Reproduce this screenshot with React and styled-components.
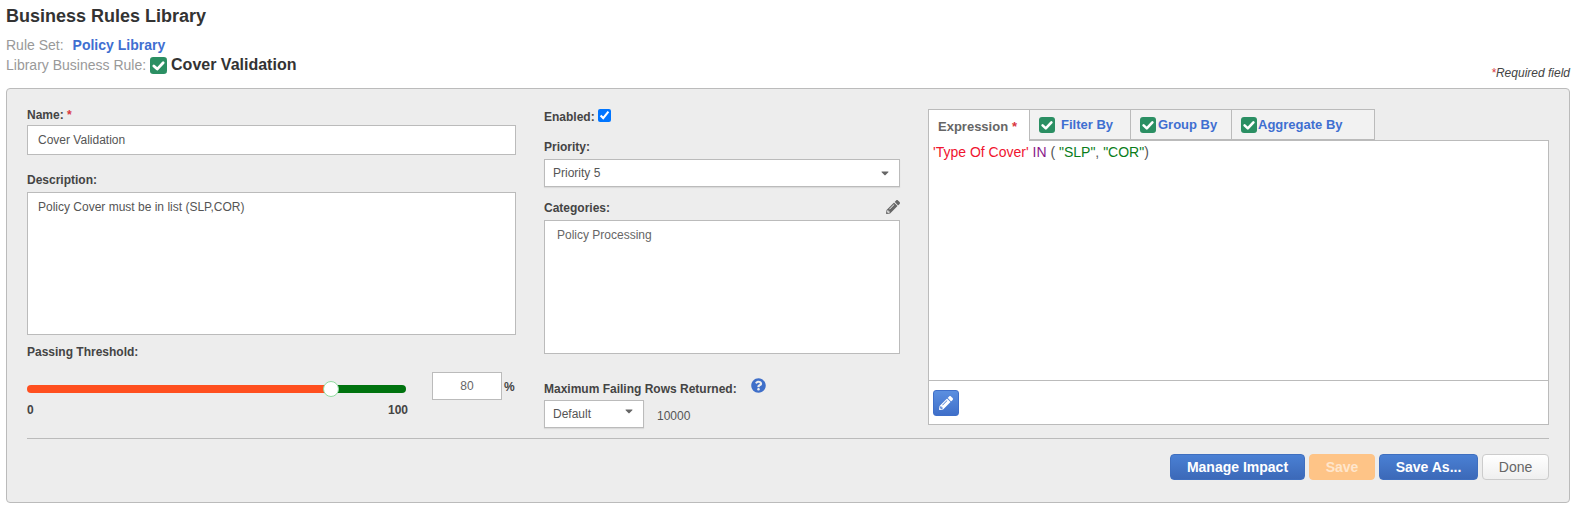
import React from "react";
import styled, { createGlobalStyle } from "styled-components";
import { FaPencilAlt, FaQuestionCircle, FaCaretDown } from "react-icons/fa";

const GlobalStyle = createGlobalStyle`
  html, body {
    margin: 0;
    background: #fff;
    font-family: "Liberation Sans", Arial, sans-serif;
    color: #333;
  }
`;

const CheckBadge = ({ className }) => (
  <svg className={className} viewBox="0 0 16 16">
    <rect width="16" height="16" rx="3" fill="#2b8f63" />
    <polyline
      points="3.6,8.4 6.8,11.4 12.4,5.4"
      fill="none"
      stroke="#fff"
      strokeWidth="2.6"
      strokeLinecap="round"
      strokeLinejoin="round"
    />
  </svg>
);

const App = () => {
  return (
    <Page>
      <GlobalStyle />
      <Header>
        <div>
          <Title>Business Rules Library</Title>
          <MetaRow>
            <MetaLabel>Rule Set:</MetaLabel>
            <RuleSetLink>Policy Library</RuleSetLink>
          </MetaRow>
          <RuleRow>
            <MetaLabel>Library Business Rule:</MetaLabel>
            <RuleCheck />
            <RuleName>Cover Validation</RuleName>
          </RuleRow>
        </div>
        <RequiredNote>
          <Star>*</Star>Required field
        </RequiredNote>
      </Header>

      <Panel>
        <Columns>
          <LeftColumn>
            <Label $top={1}>
              Name: <Star>*</Star>
            </Label>
            <TextInput defaultValue="Cover Validation" />
            <Label $top={17}>Description:</Label>
            <DescriptionArea defaultValue="Policy Cover must be in list (SLP,COR)" />
            <Label $top={9}>Passing Threshold:</Label>
            <ThresholdRow>
              <SliderBox>
                <Track>
                  <TrackFill $width={80} />
                  <TrackRest />
                  <Knob $left={80} />
                </Track>
                <SliderScale>
                  <span>0</span>
                  <span>100</span>
                </SliderScale>
              </SliderBox>
              <PercentInput defaultValue="80" />
              <Percent>%</Percent>
            </ThresholdRow>
          </LeftColumn>

          <MiddleColumn>
            <EnabledRow>
              <Label>Enabled:</Label>
              <Checkbox type="checkbox" defaultChecked />
            </EnabledRow>
            <Label $top={14}>Priority:</Label>
            <SelectBox>
              Priority 5
              <Caret />
            </SelectBox>
            <CategoriesHead>
              <Label>Categories:</Label>
              <EditPencil />
            </CategoriesHead>
            <CategoriesBox>Policy Processing</CategoriesBox>
            <MaxRowsHead>
              <Label>Maximum Failing Rows Returned:</Label>
              <HelpIcon />
            </MaxRowsHead>
            <MaxRowsRow>
              <SelectBox $width={100}>
                Default
                <Caret $raise={3} />
              </SelectBox>
              <MaxRowsValue>10000</MaxRowsValue>
            </MaxRowsRow>
          </MiddleColumn>

          <RightColumn>
            <Tabs>
              <ActiveTab>
                Expression <Star>*</Star>
              </ActiveTab>
              <Tab $width={101}>
                <TabCheck />
                <TabText $left={6}>Filter By</TabText>
              </Tab>
              <Tab $width={101}>
                <TabCheck />
                <TabText $left={2}>Group By</TabText>
              </Tab>
              <Tab $width={143}>
                <TabCheck />
                <TabText $left={1}>Aggregate By</TabText>
              </Tab>
            </Tabs>
            <Editor>
              <Code>
                <Red>'Type Of Cover'</Red> <Purple>IN</Purple> ( <Green>"SLP"</Green>,{" "}
                <Green>"COR"</Green>)
              </Code>
              <EditorFooter>
                <EditButton>
                  <FaPencilAlt />
                </EditButton>
              </EditorFooter>
            </Editor>
          </RightColumn>
        </Columns>

        <Actions>
          <PrimaryButton>Manage Impact</PrimaryButton>
          <DisabledButton>Save</DisabledButton>
          <PrimaryButton $width={99}>Save As...</PrimaryButton>
          <DoneButton>Done</DoneButton>
        </Actions>
      </Panel>
    </Page>
  );
};

export default App;

const Page = styled.div`
  width: 1564px;
  padding: 6px 0 0 6px;
`;
const Header = styled.div`
  display: flex;
  justify-content: space-between;
  align-items: flex-end;
  padding-bottom: 13px;
`;
const Title = styled.h1`
  margin: 0;
  height: 21px;
  font-size: 18px;
  line-height: 20px;
  font-weight: bold;
  color: #333;
`;
const MetaRow = styled.div`
  display: flex;
  align-items: center;
  height: 20px;
  margin-top: 8px;
`;
const RuleRow = styled(MetaRow)`
  margin-top: 0;
`;
const MetaLabel = styled.span`
  font-size: 14px;
  color: #999;
`;
const RuleSetLink = styled.span`
  margin-left: 9px;
  font-size: 14px;
  font-weight: bold;
  color: #3f6fd1;
`;
const RuleCheck = styled(CheckBadge)`
  width: 17px;
  height: 17px;
  margin-left: 4px;
`;
const RuleName = styled.span`
  margin-left: 4px;
  font-size: 16px;
  font-weight: bold;
  color: #333;
`;
const RequiredNote = styled.div`
  margin-bottom: -5px;
  font-size: 12px;
  line-height: 14px;
  font-style: italic;
  color: #444;
`;
const Star = styled.span`
  color: #d9363e;
`;
const Panel = styled.div`
  box-sizing: border-box;
  width: 1564px;
  height: 415px;
  padding: 17px 20px 0;
  background: #ededed;
  border: 1px solid #bbb;
  border-radius: 4px;
`;
const Columns = styled.div`
  display: grid;
  grid-template-columns: 489px 356px 621px;
  column-gap: 28px;
  height: 332px;
  border-bottom: 1px solid #bbb;
`;
const LeftColumn = styled.div`
  display: flex;
  flex-direction: column;
`;
const MiddleColumn = styled.div`
  display: flex;
  flex-direction: column;
`;
const RightColumn = styled.div`
  display: flex;
  flex-direction: column;
  margin-top: 3px;
`;
const Label = styled.label`
  height: 16px;
  margin-top: ${(p) => p.$top || 0}px;
  font-size: 12px;
  line-height: 16px;
  font-weight: bold;
  color: #444;
`;
const TextInput = styled.input`
  box-sizing: border-box;
  width: 100%;
  height: 30px;
  margin-top: 2px;
  padding: 0 10px;
  background: #fff;
  border: 1px solid #bbb;
  border-radius: 0;
  outline: none;
  font: 12px "Liberation Sans", Arial, sans-serif;
  color: #555;
`;
const DescriptionArea = styled.textarea`
  display: block;
  box-sizing: border-box;
  width: 100%;
  height: 143px;
  margin: 4px 0 0;
  padding: 7px 10px;
  background: #fff;
  border: 1px solid #bbb;
  border-radius: 0;
  outline: none;
  resize: none;
  font: 12px "Liberation Sans", Arial, sans-serif;
  color: #555;
`;
const ThresholdRow = styled.div`
  display: flex;
  margin-top: 12px;
`;
const SliderBox = styled.div`
  width: 379px;
  padding-top: 13px;
`;
const Track = styled.div`
  position: relative;
  display: flex;
  height: 8px;
`;
const TrackFill = styled.div`
  width: ${(p) => p.$width}%;
  background: #ff4f1f;
  border-radius: 4px 0 0 4px;
`;
const TrackRest = styled.div`
  flex: 1;
  background: #00730f;
  border-radius: 0 4px 4px 0;
`;
const Knob = styled.div`
  position: absolute;
  left: calc(${(p) => p.$left}% - 7px);
  top: -4px;
  box-sizing: border-box;
  width: 16px;
  height: 16px;
  background: #fff;
  border: 1px solid #90dba0;
  border-radius: 50%;
`;
const SliderScale = styled.div`
  display: flex;
  justify-content: space-between;
  width: 381px;
  margin-top: 10px;
  font-size: 12px;
  line-height: 14px;
  font-weight: bold;
  color: #444;
`;
const PercentInput = styled.input`
  box-sizing: border-box;
  width: 70px;
  height: 28px;
  margin-left: 26px;
  padding: 0;
  background: #fff;
  border: 1px solid #bbb;
  border-radius: 0;
  outline: none;
  text-align: center;
  font: 12px "Liberation Sans", Arial, sans-serif;
  color: #666;
`;
const Percent = styled.span`
  margin: 7px 0 0 2px;
  font-size: 12px;
  line-height: 16px;
  font-weight: bold;
  color: #444;
`;
const EnabledRow = styled.div`
  display: flex;
  align-items: center;
  height: 16px;
  margin-top: 3px;
`;
const Checkbox = styled.input`
  width: 13px;
  height: 13px;
  margin: -4px 0 0 3px;
  accent-color: #0075ff;
`;
const SelectBox = styled.div`
  display: flex;
  align-items: center;
  justify-content: space-between;
  box-sizing: border-box;
  width: ${(p) => (p.$width ? `${p.$width}px` : "100%")};
  height: 28px;
  margin-top: 4px;
  padding: 0 9px 0 8px;
  background: #fff;
  border: 1px solid #bbb;
  box-shadow: 0 1px 1px rgba(0, 0, 0, 0.08);
  font-size: 12px;
  color: #555;
`;
const Caret = styled(FaCaretDown)`
  width: 10px;
  height: 12px;
  margin-bottom: ${(p) => (p.$raise || 0) * 2}px;
  color: #666;
`;
const CategoriesHead = styled.div`
  display: flex;
  align-items: center;
  justify-content: space-between;
  height: 16px;
  margin-top: 13px;
`;
const EditPencil = styled(FaPencilAlt)`
  width: 14px;
  height: 14px;
  margin-top: -3px;
  color: #666;
`;
const CategoriesBox = styled.div`
  box-sizing: border-box;
  height: 134px;
  margin-top: 4px;
  padding: 7px 12px;
  background: #fff;
  border: 1px solid #bbb;
  font-size: 12px;
  line-height: 14px;
  color: #666;
`;
const MaxRowsHead = styled.div`
  display: flex;
  align-items: center;
  height: 16px;
  margin-top: 27px;
`;
const HelpIcon = styled(FaQuestionCircle)`
  width: 15px;
  height: 15px;
  margin: -8px 0 0 14px;
  color: #3f6fc9;
`;
const MaxRowsRow = styled.div`
  display: flex;
  align-items: flex-start;
  margin-top: -1px;
`;
const MaxRowsValue = styled.span`
  margin: 12px 0 0 13px;
  font-size: 12px;
  line-height: 16px;
  color: #555;
`;
const Tabs = styled.div`
  display: flex;
  height: 31px;
`;
const Tab = styled.div`
  display: flex;
  align-items: center;
  box-sizing: border-box;
  width: ${(p) => p.$width}px;
  padding-left: 9px;
  background: #f2f2f2;
  border: 1px solid #bbb;
  border-left: none;
`;
const ActiveTab = styled.div`
  position: relative;
  z-index: 1;
  display: flex;
  align-items: center;
  gap: 4px;
  box-sizing: border-box;
  width: 102px;
  margin-bottom: -1px;
  padding: 2px 0 0 9px;
  background: #fff;
  border: 1px solid #bbb;
  border-bottom: none;
  font-size: 13px;
  font-weight: bold;
  color: #666;
`;
const TabCheck = styled(CheckBadge)`
  width: 16px;
  height: 16px;
`;
const TabText = styled.span`
  margin-left: ${(p) => p.$left}px;
  font-size: 13px;
  font-weight: bold;
  color: #3f6fd1;
`;
const Editor = styled.div`
  display: flex;
  flex-direction: column;
  height: 285px;
  box-sizing: border-box;
  background: #fff;
  border: 1px solid #bbb;
`;
const Code = styled.div`
  flex: 1;
  padding: 3px 4px;
  font-size: 14px;
  line-height: 16px;
  color: #555;
`;
const Red = styled.span`
  color: #f0142f;
`;
const Purple = styled.span`
  color: #8b1a8b;
`;
const Green = styled.span`
  color: #0a7d1a;
`;
const EditorFooter = styled.div`
  box-sizing: border-box;
  height: 44px;
  padding: 9px 4px;
  border-top: 1px solid #bbb;
`;
const EditButton = styled.button`
  display: flex;
  align-items: center;
  justify-content: center;
  box-sizing: border-box;
  width: 26px;
  height: 26px;
  padding: 0;
  background: linear-gradient(#5b8fe0, #3f6fc9);
  border: 1px solid #3f6fc9;
  border-radius: 3px;
  color: #fff;
  font-size: 14px;
`;
const Actions = styled.div`
  display: flex;
  justify-content: flex-end;
  gap: 4px;
  margin-top: 15px;
`;
const BaseButton = styled.button`
  box-sizing: border-box;
  height: 26px;
  padding: 0;
  border-radius: 4px;
  font: bold 14px "Liberation Sans", Arial, sans-serif;
`;
const PrimaryButton = styled(BaseButton)`
  width: ${(p) => p.$width || 135}px;
  background: linear-gradient(#4a80d4, #3c69b8);
  border: 1px solid #3f6fbf;
  color: #fff;
`;
const DisabledButton = styled(BaseButton)`
  width: 66px;
  background: #fec487;
  border: 1px solid #fec487;
  color: #ffe6cc;
`;
const DoneButton = styled(BaseButton)`
  width: 67px;
  background: linear-gradient(#fff, #efefef);
  border: 1px solid #ccc;
  font-weight: normal;
  color: #666;
`;
